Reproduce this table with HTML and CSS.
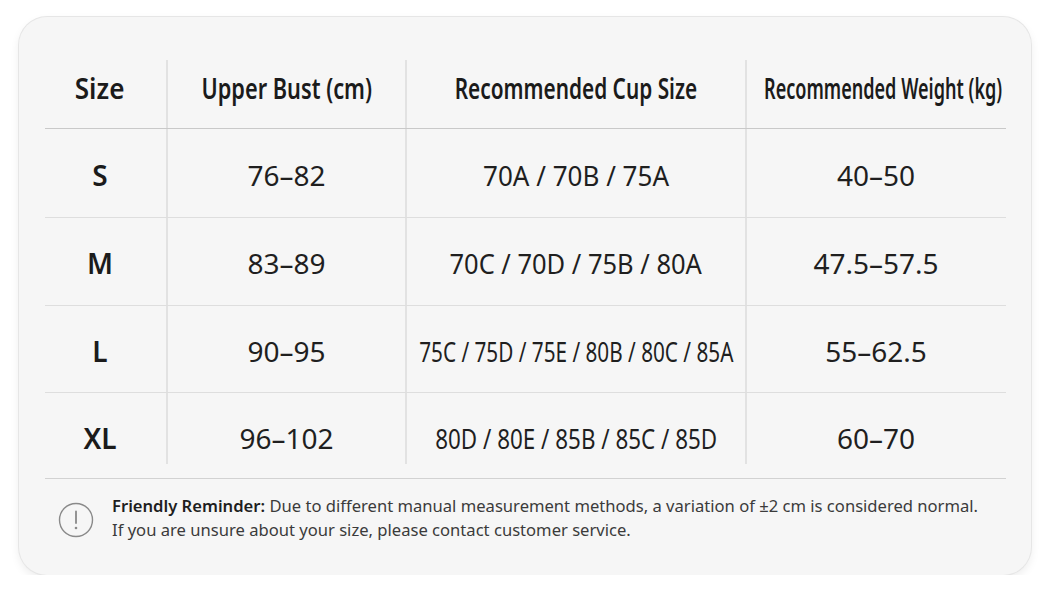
FILE: index.html
```html
<!DOCTYPE html>
<html lang="en">
<head>
<meta charset="utf-8">
<link rel="stylesheet" href="styles.css">
</head>
<body>
<div class="card">
  <table class="sizes">
    <colgroup>
      <col class="c1"><col class="c2"><col class="c3"><col class="c4">
    </colgroup>
    <thead>
      <tr>
        <th class="sz"><div class="in"><span class="hd hd-size">Size</span></div></th>
        <th><div class="in"><span class="hd">Upper Bust (cm)</span></div></th>
        <th><div class="in"><span class="hd hd-cup">Recommended Cup Size</span></div></th>
        <th><div class="in in-weight"><span class="hd hd-weight">Recommended Weight (kg)</span></div></th>
      </tr>
    </thead>
    <tbody>
      <tr class="first">
        <td class="sz"><div class="in">S</div></td>
        <td><div class="in">76–82</div></td>
        <td><div class="in"><span class="cup cup-3">70A / 70B / 75A</span></div></td>
        <td><div class="in">40–50</div></td>
      </tr>
      <tr>
        <td class="sz"><div class="in">M</div></td>
        <td><div class="in">83–89</div></td>
        <td><div class="in"><span class="cup cup-4">70C / 70D / 75B / 80A</span></div></td>
        <td><div class="in">47.5–57.5</div></td>
      </tr>
      <tr>
        <td class="sz"><div class="in">L</div></td>
        <td><div class="in">90–95</div></td>
        <td><div class="in"><span class="cup cup-6">75C / 75D / 75E / 80B / 80C / 85A</span></div></td>
        <td><div class="in">55–62.5</div></td>
      </tr>
      <tr class="last">
        <td class="sz"><div class="in">XL</div></td>
        <td><div class="in">96–102</div></td>
        <td><div class="in"><span class="cup cup-5">80D / 80E / 85B / 85C / 85D</span></div></td>
        <td><div class="in">60–70</div></td>
      </tr>
    </tbody>
  </table>
  <div class="note">
    <svg class="note-icon" width="36" height="36" viewBox="0 0 36 36" aria-hidden="true">
      <circle cx="18" cy="18" r="16.5" fill="none" stroke="#8a8a8a" stroke-width="1.4"/>
      <line x1="18" y1="9.5" x2="18" y2="21" stroke="#8a8a8a" stroke-width="1.8" stroke-linecap="round"/>
      <circle cx="18" cy="26" r="1.3" fill="#8a8a8a"/>
    </svg>
    <p class="note-text"><b>Friendly Reminder:</b> Due to different manual measurement methods, a variation of ±2 cm is considered normal.<br>If you are unsure about your size, please contact customer service.</p>
  </div>
</div>
</body>
</html>
```

FILE: styles.css
```css
html, body {
  margin: 0;
  padding: 0;
  background: #ffffff;
}
body {
  font-family: "Noto Sans", "Open Sans", sans-serif;
  color: #1e1e1e;
}
.card {
  margin: 17px 19px 0 19px;
  width: 1012px;
  height: 558px;
  box-sizing: border-box;
  background: #f6f6f6;
  border-radius: 28px;
  box-shadow: 0 0 0 1px #e6e6e6, 0 4px 10px rgba(0,0,0,0.08);
  padding: 43px 25px 0 26px;
}
.sizes {
  width: 961px;
  border-collapse: collapse;
  table-layout: fixed;
}
.c1 { width: 122px; }
.c2 { width: 239px; }
.c3 { width: 340px; }
.c4 { width: 260px; }
.sizes th, .sizes td {
  position: relative;
  padding: 0;
  white-space: nowrap;
}
.in {
  display: flex;
  justify-content: center;
  align-items: center;
}
.sizes th {
  height: 68px;
  padding-bottom: 12px;
  box-sizing: border-box;
  border-bottom: 1.5px solid #c9c9c9;
  font-weight: 600;
  font-size: 29px;
  color: #1b1b1b;
}
.hd {
  display: inline-block;
  transform: scaleX(0.75);
}
.hd-size { transform: scaleX(0.9); }
.hd-cup { transform: scaleX(0.718); }
.hd-weight { transform: scaleX(0.623); }
.in-weight { padding-left: 14px; }
.sizes td {
  height: 87.5px;
  padding-top: 4px;
  box-sizing: border-box;
  border-bottom: 1.5px solid #dedede;
  font-size: 28px;
  color: #1f1f1f;
}
.sizes tr.first td {
  height: 89.5px;
}
.sizes tr.last td {
  height: 86px;
  border-bottom-color: #d2d2d2;
}
.sizes th + th::before,
.sizes td + td::before {
  content: "";
  position: absolute;
  left: -1px;
  top: 0;
  bottom: 0;
  width: 1.5px;
  background: #e2e2e2;
}
.sizes tr.last td + td::before {
  bottom: 14px;
}
.sizes .sz {
  padding-right: 12px;
}
.sizes td.sz {
  font-weight: 600;
  color: #1b1b1b;
}
.cup {
  display: inline-block;
}
.cup-3 { transform: scaleX(0.93); }
.cup-4 { transform: scaleX(0.91); }
.cup-6 { transform: scaleX(0.74); }
.cup-5 { transform: scaleX(0.8); }
.note {
  display: flex;
  align-items: center;
  gap: 18px;
  padding: 17px 0 0 13px;
}
.note-icon { flex: none; }
.note-text {
  margin: 0;
  font-size: 16.6px;
  line-height: 24px;
  color: #3b3b3b;
  position: relative;
  top: -2px;
}
.note-text b {
  font-weight: 600;
  color: #1e1e1e;
}
```
